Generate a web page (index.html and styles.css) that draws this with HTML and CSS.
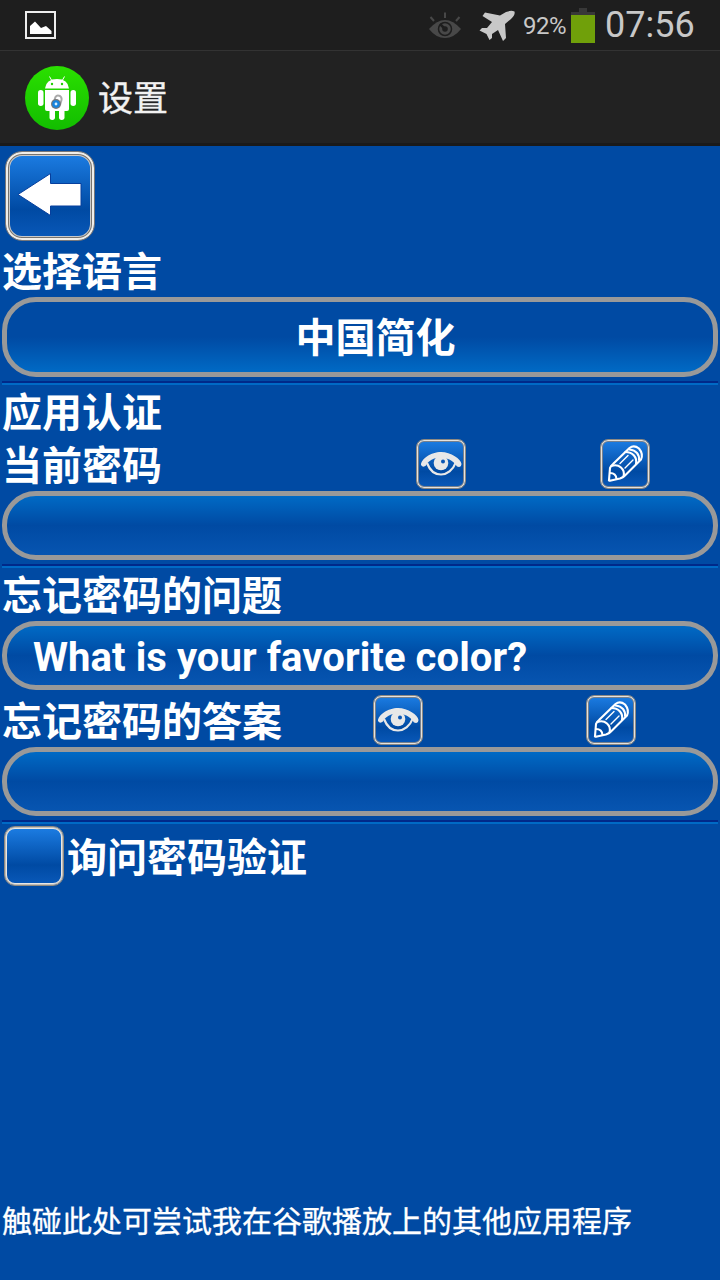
FILE: index.html
```html
<!DOCTYPE html>
<html lang="zh-CN">
<head>
    <meta charset="UTF-8">
    <meta name="viewport" content="width=device-width, initial-scale=1.0">
    <title>设置</title>
    <link rel="stylesheet" href="styles.css">
</head>
<body>
    <!-- shared icons -->
    <svg class="defs" width="0" height="0">
        <symbol id="eye" viewBox="0 0 50 50">
            <path d="M5 26 C5 20 15 13 25 13 C35 13 45 20 45.500 25 Q45 29 41 27.500 C37 21 30 18.500 25 18.500 C18 18.500 12 22 10 26.500 Q7 29 5 26Z" fill="#e8e8e8"/>
            <path d="M11 24 C14 32 19 35.500 25 35.500 C31 35.500 37 31 39.500 24" fill="none" stroke="#e8e8e8" stroke-width="2.200"/>
            <circle cx="25" cy="24" r="7.300" fill="#e8e8e8"/>
            <circle cx="27" cy="22.500" r="2" fill="#0a56b4"/>
        </symbol>
        <symbol id="pencil" viewBox="0 0 50 50">
            <g fill="none" stroke="#fff" stroke-width="2.100" stroke-linejoin="round" stroke-linecap="round">
                <path d="M9 41 L10 29 Q11 26.500 13 25 L29.500 9 Q34 5.500 39 9.500 Q43.500 15 41 20.500 L25 36.500 Q23 38.500 20 39.500 L11 41.500 Q8.500 42 9 41Z"/>
                <path d="M11.500 27 Q17 25 21 28.500 Q25 32 23.500 37.500"/>
                <path d="M10 34 Q16 34 16.500 40"/>
                <path d="M25.500 13 Q31 13 34 16.500 Q37 20 36 25"/>
                <path d="M29.500 10.500 Q34.500 11 37 14 Q39.500 17 39 21"/>
                <path d="M20 24.500 L28 16.500 M25 29 L33 21" stroke-width="1.400"/>
            </g>
        </symbol>
    </svg>

    <div class="status-bar">
        <svg class="picture" width="31" height="28" viewBox="0 0 31 28">
            <rect x="1" y="1" width="29" height="26" fill="none" stroke="#eee" stroke-width="2"/>
            <path d="M5 23 V15 L10 10.500 L16 17 L21 15 L26.500 20 V23Z" fill="#fff"/>
        </svg>
        <svg class="smart-eye" width="34" height="28" viewBox="0 0 34 28">
            <path d="M1 17 Q9 8 17 8 Q25 8 33 17 Q26 26 17 26 Q8 26 1 17Z" fill="#484848"/>
            <circle cx="17" cy="17" r="6.500" fill="none" stroke="#1e1e1e" stroke-width="1.500"/>
            <path d="M12 12 L17 17" stroke="#1e1e1e" stroke-width="2.500"/>
            <circle cx="17" cy="17" r="2.800" fill="#1e1e1e"/>
            <path d="M2.500 5 L6 9 M17 .500 V6 M31.500 5 L28 9" stroke="#484848" stroke-width="2"/>
        </svg>
        <svg class="plane" width="38" height="32" viewBox="0 0 38 32">
            <path d="M36.500 1.500 Q37.500 5 33 9 L27 14 L28 28 L25 31 L20 20 L14 24 L14 28 L11.500 30 L8.500 24 L1.500 20.500 L4 18 L9 18 L14 12 L4.500 6 L7 2.500 L22 5.500 L28 2 Q33 0 36.500 1.500Z" fill="#c8c8c8"/>
        </svg>
        <span class="percent">92%</span>
        <svg class="battery" width="24" height="35" viewBox="0 0 24 35">
            <path d="M8 0 H16 V4 H24 V8 H0 V4 H8Z" fill="#383838"/>
            <rect y="7" width="24" height="28" fill="#70a00a"/>
        </svg>
        <span class="clock">07:56</span>
    </div>

    <div class="header">
        <svg class="logo" width="64" height="64" viewBox="0 0 64 64">
            <defs>
                <linearGradient id="green" x2="0" y2="1">
                    <stop offset="0" stop-color="#2be000"/>
                    <stop offset="1" stop-color="#12bd00"/>
                </linearGradient>
            </defs>
            <circle cx="32" cy="32" r="32" fill="url(#green)"/>
            <g fill="#fff">
                <path d="M20 22.500 Q21 13 32 13 Q43 13 44 22.500Z"/>
                <path d="M20 24 H44 V43 Q44 45 42 45 H22 Q20 45 20 43Z"/>
                <rect x="13" y="24" width="5.500" height="16" rx="2.700"/>
                <rect x="45.500" y="24" width="5.500" height="16" rx="2.700"/>
                <rect x="24.500" y="42" width="5.500" height="12" rx="2.700"/>
                <rect x="34" y="42" width="5.500" height="12" rx="2.700"/>
            </g>
            <path d="M24.500 10.500 L27 15 M39.500 10.500 L37 15" stroke="#fff" stroke-width="1"/>
            <circle cx="27" cy="18" r="1.200" fill="#1fcf00"/>
            <circle cx="37" cy="18" r="1.200" fill="#1fcf00"/>
            <path d="M29.500 34 L30.500 31 Q32 28.500 35 30 Q37 31.500 36.500 34 L35 39" fill="none" stroke="#aaa" stroke-width="2"/>
            <circle cx="31" cy="38" r="5" fill="#777"/>
            <circle cx="31" cy="38" r="3.800" fill="#1683df"/>
            <circle cx="31" cy="38" r="1.400" fill="#d6f0ff"/>
        </svg>
        <h1>设置</h1>
    </div>

    <div class="content">
        <button class="tile back" aria-label="返回">
            <svg width="90" height="90" viewBox="0 0 90 90">
                <path d="M13 43.500 L45.500 22.500 V32.500 H76 V55 H45.500 V64.500 Z" fill="#fff" stroke="#063f9d" stroke-width="1" stroke-linejoin="round"/>
            </svg>
        </button>

        <div class="label first">选择语言</div>
        <div class="box language">中国简化</div>
        <div class="divider"></div>

        <div class="label">应用认证</div>
        <div class="row password">
            <div class="label">当前密码</div>
            <button class="tile small"><svg width="50" height="50"><use href="#eye"/></svg></button>
            <button class="tile small"><svg width="50" height="50"><use href="#pencil"/></svg></button>
        </div>
        <div class="box"></div>
        <div class="divider"></div>

        <div class="label">忘记密码的问题</div>
        <div class="box question">What is your favorite color?</div>
        <div class="row answer">
            <div class="label">忘记密码的答案</div>
            <button class="tile small"><svg width="50" height="50"><use href="#eye"/></svg></button>
            <button class="tile small"><svg width="50" height="50"><use href="#pencil"/></svg></button>
        </div>
        <div class="box"></div>
        <div class="divider"></div>

        <div class="row verify">
            <button class="tile check" aria-label="询问密码验证"></button>
            <div class="label">询问密码验证</div>
        </div>

        <div class="more">触碰此处可尝试我在谷歌播放上的其他应用程序</div>
    </div>
</body>
</html>
```
FILE: styles.css
```css
* {
    box-sizing: border-box;
}

body {
    display: flex;
    flex-direction: column;
    height: 1280px;
    margin: 0;
    background: #004aa3;
    color: white;
    font-family: Roboto, "Noto Sans CJK SC", sans-serif;
    overflow: hidden;
}

svg {
    display: block;
    flex: none;
}

.defs {
    display: none;
}

.status-bar {
    display: flex;
    height: 51px;
    padding-left: 25px;
    background: #1e1e1e;
    border-bottom: 1px solid #333;
    color: #c8c8c8;
}

.picture {
    margin-top: 11px;
}

.smart-eye {
    margin: 12px 0 0 372px;
}

.plane {
    margin: 10px 0 0 16px;
}

.percent {
    width: 49px;
    margin-left: 7px;
    font-size: 24px;
    line-height: 52px;
    letter-spacing: -0.5px;
}

.battery {
    margin-top: 8px;
    margin-left: -1px;
}

.clock {
    margin-left: 10px;
    font-size: 36px;
    line-height: 50px;
}

.header {
    display: flex;
    height: 95px;
    padding: 15px 0 0 25px;
    background: #222;
    border-bottom: 3px solid #1a1a1a;
}

h1 {
    margin: 0 0 0 9px;
    font-size: 35px;
    font-weight: 400;
    line-height: 68px;
    color: #f2f2f2;
    -webkit-text-stroke: 0.4px #f2f2f2;
}

.content {
    display: flex;
    flex: 1;
    flex-direction: column;
    padding: 5px 2px 0;
}

.tile {
    flex: none;
    padding: 0;
    border: 1px solid #8d8982;
    background: linear-gradient(#1d7fe6, #004aa3 65%, #0a5abb) border-box;
    box-shadow: inset 0 0 0 1px #e4e2df, inset 0 0 0 2px #77818e;
}

.back {
    width: 90px;
    height: 90px;
    margin-left: 3px;
    border: 1px solid #77777a;
    border-radius: 17px;
    box-shadow: inset 0 0 0 2px #f0eeea, inset 0 0 0 3px #77736e, inset 0 0 0 4px #c9c9c9;
}

.back svg {
    margin: -1px;
}

.small {
    width: 50px;
    height: 50px;
    border-radius: 8px;
}

.small svg {
    margin: -1px;
}

.check {
    width: 60px;
    height: 60px;
    border-radius: 11px;
    box-shadow: inset 0 0 0 1px #c2beb8, inset 0 0 0 2px #e9e7e4;
}

.label {
    height: 53px;
    font-size: 40px;
    font-weight: 700;
    line-height: 58px;
    white-space: nowrap;
}

.first {
    height: 56px;
    line-height: 64px;
}

.box {
    height: 69px;
    border: 5px solid #999;
    border-radius: 34px;
    background: linear-gradient(#006ac5, #004aa3 50%, #0755b1);
}

.language {
    height: 80px;
    padding-left: 31px;
    background: linear-gradient(#004aa3 50%, #006ac5);
    font-size: 40px;
    font-weight: 700;
    line-height: 73px;
    text-align: center;
}

.question {
    padding-left: 26px;
    font-size: 40px;
    font-weight: 700;
    line-height: 63px;
    letter-spacing: 0.07px;
}

.divider {
    height: 4px;
    margin-top: 4px;
    border-top: 2px solid #002989;
    border-bottom: 2px solid #006ac5;
    flex: none;
}

.row {
    display: grid;
}

.password {
    height: 53px;
    grid-template-columns: 414px 184px 50px;
}

.password .tile {
    margin-top: 1px;
}

.answer {
    height: 57px;
    grid-template-columns: 371px 213px 50px;
}

.answer .tile {
    margin-top: 5px;
}

.answer .label {
    line-height: 66px;
}

.verify {
    grid-template-columns: 60px 1fr;
    gap: 3px;
    padding: 2px 0 0 2px;
}

.verify .label {
    line-height: 65px;
}

.more {
    margin: auto 0 34px 0;
    font-size: 30px;
    line-height: 48px;
    white-space: nowrap;
    -webkit-text-stroke: 0.3px white;
}
```
